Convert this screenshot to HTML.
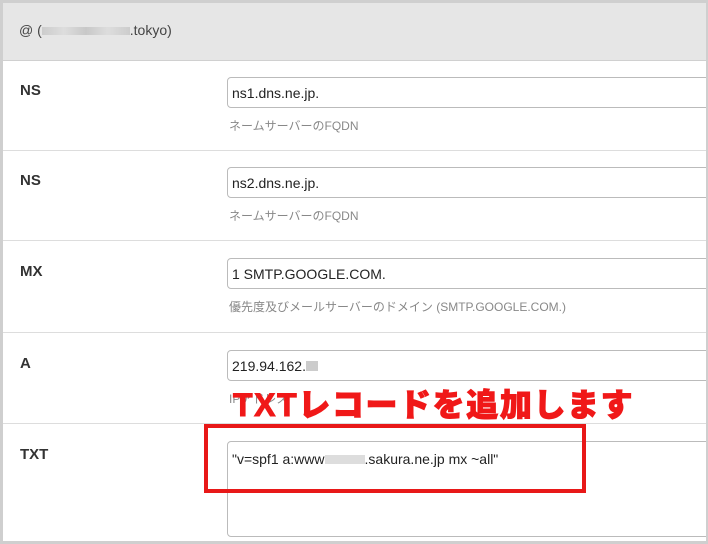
<!DOCTYPE html>
<html><head><meta charset="utf-8"><style>
*{box-sizing:border-box;margin:0;padding:0}
body{width:708px;height:544px;overflow:hidden;background:#cfcfcf;font-family:"Liberation Sans","Noto Sans CJK JP",sans-serif;position:relative}
.frame{position:absolute;left:3px;top:3px;right:2px;bottom:3px;background:#fff;overflow:hidden}
.head{position:absolute;left:0;top:0;right:0;height:58px;background:#e6e6e6;border-bottom:1px solid #d0d0d0;font-size:14px;color:#444;padding:19px 0 0 16px}
.blur{display:inline-block;width:88px;height:8px;background:linear-gradient(90deg,#ccc,#ddd,#c8c8c8,#ddd,#ccc);vertical-align:middle}
.row{position:absolute;left:0;right:0;border-bottom:1px solid #ddd}
.lbl{position:absolute;left:17px;font-size:15px;font-weight:bold;color:#333}
.inp{position:absolute;left:224px;right:-10px;height:31px;border:1px solid #bbb;border-radius:4px;font-size:14px;color:#222;padding:7px 0 0 4px}
.help{position:absolute;left:226px;font-size:12px;color:#888}
.red{position:absolute;left:233px;top:380px;font-size:32px;font-weight:900;color:#f01818;letter-spacing:1.6px;-webkit-text-stroke:1px #f01818;white-space:nowrap}
.box{position:absolute;left:204px;top:424px;width:382px;height:69px;border:4px solid #e81818}
</style></head><body>
<div class="frame">
<div class="head">@ (<span class="blur"></span>.tokyo)</div>
<div class="row" style="top:58px;height:90px"><div class="lbl" style="top:21px">NS</div><div class="inp" style="top:16px">ns1.dns.ne.jp.</div><div class="help" style="top:56px">ネームサーバーのFQDN</div></div>
<div class="row" style="top:148px;height:90px"><div class="lbl" style="top:21px">NS</div><div class="inp" style="top:16px">ns2.dns.ne.jp.</div><div class="help" style="top:56px">ネームサーバーのFQDN</div></div>
<div class="row" style="top:238px;height:92px"><div class="lbl" style="top:22px">MX</div><div class="inp" style="top:17px">1 SMTP.GOOGLE.COM.</div><div class="help" style="top:57px">優先度及びメールサーバーのドメイン (SMTP.GOOGLE.COM.)</div></div>
<div class="row" style="top:330px;height:91px"><div class="lbl" style="top:22px">A</div><div class="inp" style="top:17px">219.94.162.<span style="display:inline-block;width:12px;height:10px;background:#ccc"></span></div><div class="help" style="top:57px">IPアドレス</div></div>
<div class="row" style="top:421px;height:130px;border:none"><div class="lbl" style="top:22px">TXT</div><div class="inp" style="top:17px;height:96px;padding-top:9px;font-size:14px">"v=spf1 a:www<span style="display:inline-block;width:40px;height:9px;background:#ddd"></span>.sakura.ne.jp mx ~all"</div></div>
</div>
<div class="red">TXTレコードを追加します</div>
<div class="box"></div>
</body></html>
